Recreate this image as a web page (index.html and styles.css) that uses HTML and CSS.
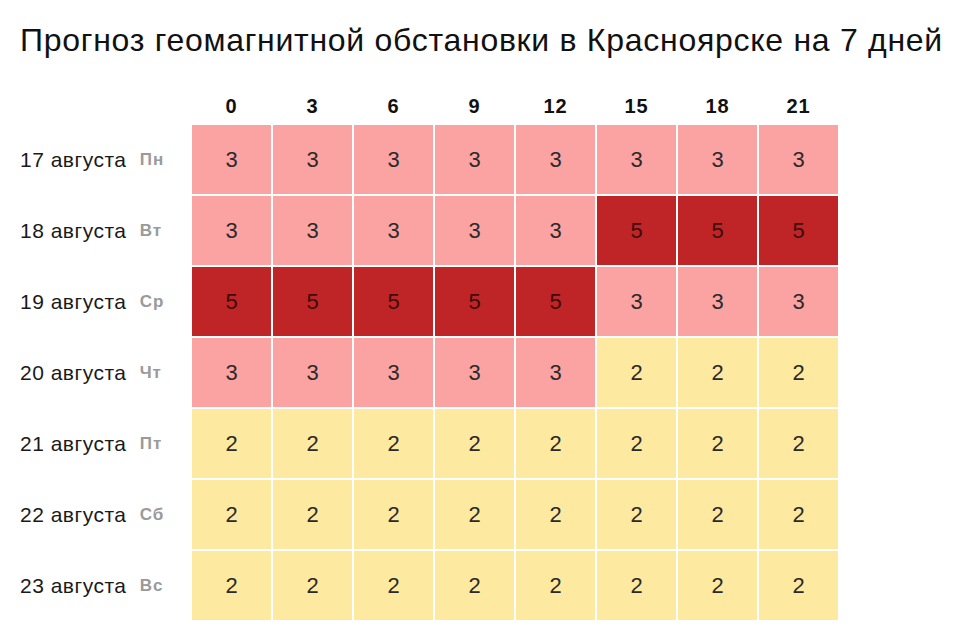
FILE: index.html
```html
<!DOCTYPE html>
<html lang="ru">
<head>
<meta charset="utf-8">
<title>Прогноз геомагнитной обстановки</title>
<link rel="stylesheet" href="styles.css">
</head>
<body>
<h1 class="title">Прогноз геомагнитной обстановки в Красноярске на 7 дней</h1>
<div class="table">
  <div class="corner"></div>
  <div class="hour">0</div><div class="hour">3</div><div class="hour">6</div><div class="hour">9</div><div class="hour">12</div><div class="hour">15</div><div class="hour">18</div><div class="hour">21</div>

  <div class="day">17 августа <span class="wd">Пн</span></div>
  <div class="c k3">3</div><div class="c k3">3</div><div class="c k3">3</div><div class="c k3">3</div><div class="c k3">3</div><div class="c k3">3</div><div class="c k3">3</div><div class="c k3">3</div>

  <div class="day">18 августа <span class="wd">Вт</span></div>
  <div class="c k3">3</div><div class="c k3">3</div><div class="c k3">3</div><div class="c k3">3</div><div class="c k3">3</div><div class="c k5">5</div><div class="c k5">5</div><div class="c k5">5</div>

  <div class="day">19 августа <span class="wd">Ср</span></div>
  <div class="c k5">5</div><div class="c k5">5</div><div class="c k5">5</div><div class="c k5">5</div><div class="c k5">5</div><div class="c k3">3</div><div class="c k3">3</div><div class="c k3">3</div>

  <div class="day">20 августа <span class="wd">Чт</span></div>
  <div class="c k3">3</div><div class="c k3">3</div><div class="c k3">3</div><div class="c k3">3</div><div class="c k3">3</div><div class="c k2">2</div><div class="c k2">2</div><div class="c k2">2</div>

  <div class="day">21 августа <span class="wd">Пт</span></div>
  <div class="c k2">2</div><div class="c k2">2</div><div class="c k2">2</div><div class="c k2">2</div><div class="c k2">2</div><div class="c k2">2</div><div class="c k2">2</div><div class="c k2">2</div>

  <div class="day">22 августа <span class="wd">Сб</span></div>
  <div class="c k2">2</div><div class="c k2">2</div><div class="c k2">2</div><div class="c k2">2</div><div class="c k2">2</div><div class="c k2">2</div><div class="c k2">2</div><div class="c k2">2</div>

  <div class="day">23 августа <span class="wd">Вс</span></div>
  <div class="c k2">2</div><div class="c k2">2</div><div class="c k2">2</div><div class="c k2">2</div><div class="c k2">2</div><div class="c k2">2</div><div class="c k2">2</div><div class="c k2">2</div>
</div>
</body>
</html>
```

FILE: styles.css
```css
html, body {
  margin: 0;
  padding: 0;
  background: #ffffff;
}
body {
  font-family: "Liberation Sans", Arial, sans-serif;
  color: #1a1a1a;
  padding-left: 20px;
}
.title {
  margin: 0;
  padding-top: 22px;
  font-size: 32px;
  line-height: 36px;
  font-weight: normal;
  letter-spacing: 0.72px;
  color: #111111;
  white-space: nowrap;
}
.table {
  margin-top: 31px;
  display: grid;
  grid-template-columns: 170px repeat(8, 79px);
  grid-template-rows: 34px repeat(7, 69px);
  gap: 2px;
}
.hour {
  display: flex;
  align-items: center;
  justify-content: center;
  font-weight: bold;
  font-size: 20px;
  letter-spacing: 0.8px;
  color: #111111;
}
.day {
  display: flex;
  align-items: center;
  font-size: 21px;
  letter-spacing: 0.5px;
  color: #1a1a1a;
  white-space: pre;
}
.wd {
  margin-left: 7px;
  font-size: 17px;
  font-weight: bold;
  letter-spacing: 0.8px;
  color: #9a9a9a;
}
.c {
  display: flex;
  align-items: center;
  justify-content: center;
  font-size: 22px;
  color: #2a2a2a;
}
.k2 { background: #fee9a1; }
.k3 { background: #fba2a2; }
.k5 { background: #bf2527; color: #3d0b0b; }
```
